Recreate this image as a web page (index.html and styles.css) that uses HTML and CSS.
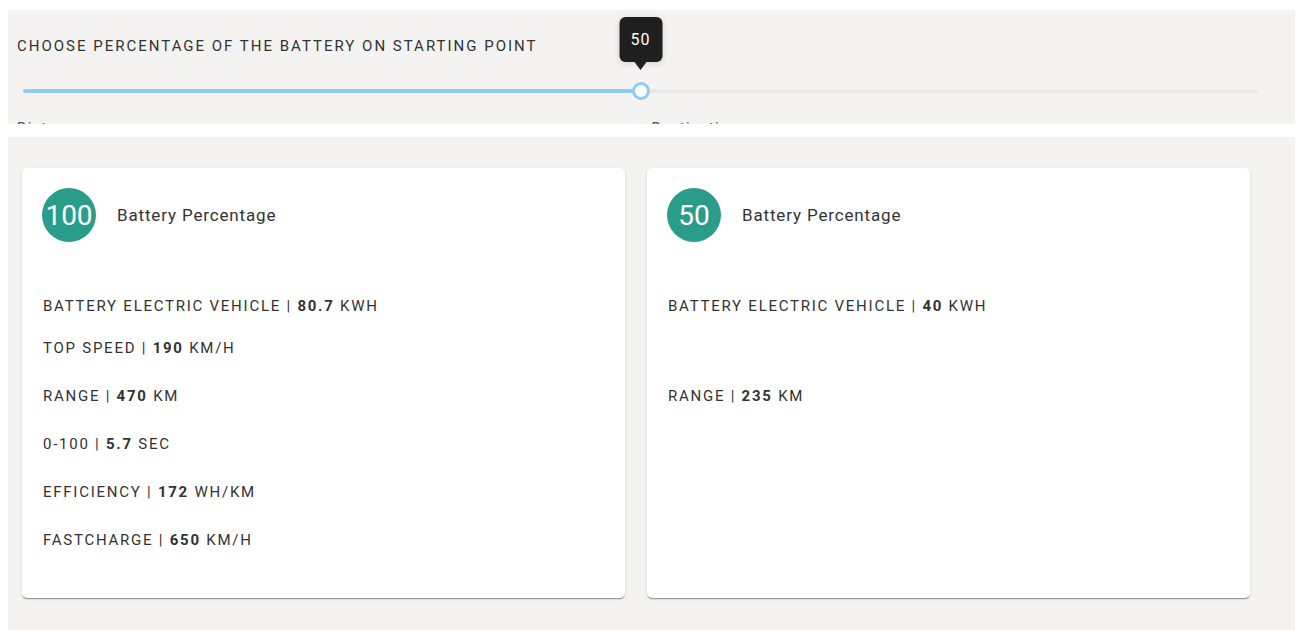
FILE: index.html
```html
<!DOCTYPE html>
<html lang="en">
<head>
<meta charset="utf-8">
<title>Battery range</title>
<link rel="stylesheet" href="styles.css">
</head>
<body>
  <section class="picker">
    <h2 class="picker-title">Choose percentage of the battery on starting point</h2>
    <div class="slider">
      <div class="slider-track"></div>
      <div class="slider-fill" style="width: 50%"></div>
      <div class="slider-thumb" style="left: 50%">
        <span class="slider-label">50</span>
      </div>
    </div>
    <div class="picker-legend">
      <span>Distance</span>
      <span>Destination</span>
    </div>
  </section>

  <section class="results">
    <article class="card">
      <header class="card-head">
        <span class="badge">100</span>
        <span class="card-title">Battery Percentage</span>
      </header>
      <ul class="specs">
        <li class="spec spec-main">Battery electric vehicle | <b>80.7</b> kWh</li>
        <li class="spec spec-first">Top speed | <b>190</b> km/h</li>
        <li class="spec">Range | <b>470</b> km</li>
        <li class="spec">0-100 | <b>5.7</b> sec</li>
        <li class="spec">Efficiency | <b>172</b> Wh/km</li>
        <li class="spec">Fastcharge | <b>650</b> km/h</li>
      </ul>
    </article>

    <article class="card">
      <header class="card-head">
        <span class="badge">50</span>
        <span class="card-title">Battery Percentage</span>
      </header>
      <ul class="specs">
        <li class="spec spec-main">Battery electric vehicle | <b>40</b> kWh</li>
        <li class="spec spec-first"></li>
        <li class="spec">Range | <b>235</b> km</li>
      </ul>
    </article>
  </section>
</body>
</html>
```

FILE: styles.css
```css
* {
  box-sizing: border-box;
}

html,
body {
  height: 100%;
}

body {
  margin: 10px 9px 0 8px;
  font-family: Roboto, "Noto Sans", Arial, sans-serif;
  color: #333;
  background: #fff;
  display: flex;
  flex-direction: column;
  gap: 13px;
}

/* slider panel */
.picker {
  background: #f4f3f1;
  height: 114px;
  overflow: hidden;
  padding: 28px 0 0 0;
  flex: none;
}

.picker-title {
  margin: 0 0 0 9px;
  font-size: 15px;
  font-weight: 400;
  line-height: 16px;
  letter-spacing: 2px;
  text-transform: uppercase;
  color: #333;
}

.slider {
  position: relative;
  margin: 35px 37px 0 15px;
  height: 4px;
}

.slider-track,
.slider-fill {
  position: absolute;
  top: 0;
  left: 0;
  height: 4px;
  border-radius: 2px;
}

.slider-track {
  width: 100%;
  background: #eaeae8;
}

.slider-fill {
  background: #90caf9;
}

.slider-thumb {
  position: absolute;
  top: 2px;
  width: 18px;
  height: 18px;
  margin: -9px 0 0 -9px;
  border-radius: 50%;
  background: #fff;
  border: 3px solid #90caf9;
}

.slider-label {
  position: absolute;
  left: 50%;
  bottom: 35px;
  transform: translateX(-50%);
  width: 43px;
  height: 45px;
  border-radius: 6px;
  background: #1f1f1f;
  color: #fff;
  font-size: 16px;
  letter-spacing: 1px;
  line-height: 45px;
  text-align: center;
  box-shadow: 0 2px 6px rgba(0, 0, 0, 0.12);
}

.slider-label::after {
  content: "";
  position: absolute;
  left: 50%;
  top: 100%;
  margin-left: -6px;
  border: 6px solid transparent;
  border-top: 8px solid #1f1f1f;
  border-bottom: 0;
}

.picker-legend {
  display: grid;
  grid-template-columns: 1fr 1fr;
  padding: 0 9px;
  margin-top: 26px;
  font-size: 15px;
  letter-spacing: 1px;
  color: #555;
}

/* result cards */
.results {
  flex: 1;
  background: #f4f3f1;
  padding: 31px 0 0 14px;
  display: grid;
  grid-template-columns: 603px 603px;
  column-gap: 22px;
  align-items: start;
}

.card {
  background: #fff;
  border-radius: 5px;
  height: 430px;
  padding: 20px 20px 0 20px;
  box-shadow: 0 2px 1px -1px rgba(0, 0, 0, 0.25), 0 1px 1px 0 rgba(0, 0, 0, 0.14), 0 1px 3px 0 rgba(0, 0, 0, 0.12);
}

.card-head {
  display: flex;
  align-items: center;
  gap: 21px;
}

.badge {
  width: 54px;
  height: 54px;
  border-radius: 50%;
  background: #2a9d8a;
  color: #fff;
  font-size: 28px;
  display: flex;
  align-items: center;
  justify-content: center;
}

.card-title {
  font-size: 17px;
  letter-spacing: 0.85px;
  color: #333;
}

.specs {
  list-style: none;
  margin: 52px 0 0 1px;
  padding: 0;
}

.spec {
  height: 24px;
  line-height: 24px;
  font-size: 15px;
  letter-spacing: 1.75px;
  text-transform: uppercase;
  color: #333;
  margin-bottom: 24px;
}

.spec-main {
  margin-bottom: 18px;
}

.spec b {
  font-weight: 700;
}
```
